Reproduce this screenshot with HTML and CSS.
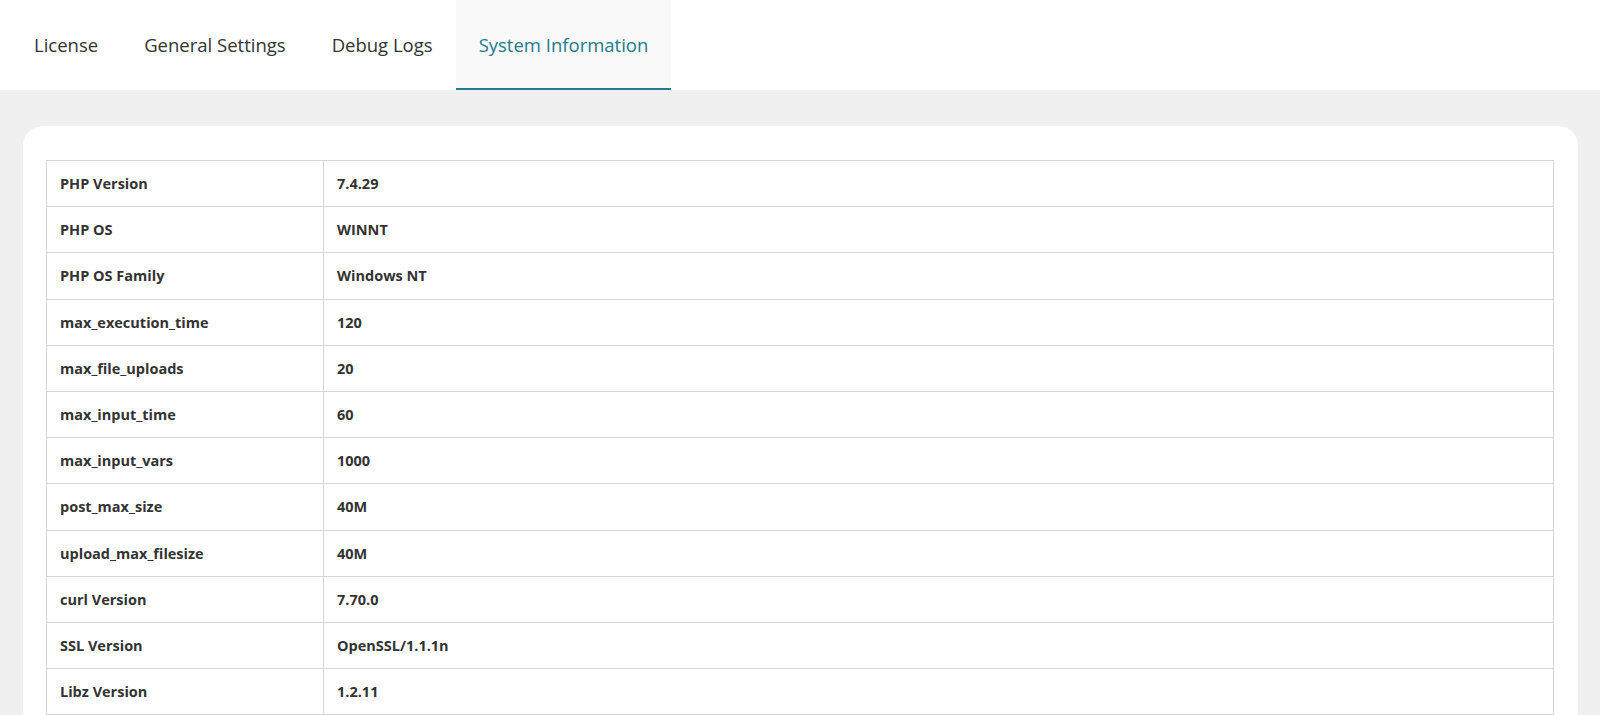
FILE: index.html
```html
<!DOCTYPE html>
<html lang="en">
<head>
    <meta charset="UTF-8">
    <meta name="viewport" content="width=device-width, initial-scale=1.0">
    <title>System Information</title>
    <link rel="stylesheet" href="styles.css">
</head>
<body>
    <!-- tabs -->
    <div class="tabs">
        <a class="tab" href="#">License</a>
        <a class="tab" href="#">General Settings</a>
        <a class="tab" href="#">Debug Logs</a>
        <a class="tab active" href="#">System Information</a>
    </div>

    <div class="content">
        <div class="card">
            <table class="info-table">
                <tr><td class="key">PHP Version</td><td>7.4.29</td></tr>
                <tr><td class="key">PHP OS</td><td>WINNT</td></tr>
                <tr><td class="key">PHP OS Family</td><td>Windows NT</td></tr>
                <tr><td class="key">max_execution_time</td><td>120</td></tr>
                <tr><td class="key">max_file_uploads</td><td>20</td></tr>
                <tr><td class="key">max_input_time</td><td>60</td></tr>
                <tr><td class="key">max_input_vars</td><td>1000</td></tr>
                <tr><td class="key">post_max_size</td><td>40M</td></tr>
                <tr><td class="key">upload_max_filesize</td><td>40M</td></tr>
                <tr><td class="key">curl Version</td><td>7.70.0</td></tr>
                <tr><td class="key">SSL Version</td><td>OpenSSL/1.1.1n</td></tr>
                <tr><td class="key">Libz Version</td><td>1.2.11</td></tr>
                <tr><td class="key"></td><td></td></tr>
            </table>
        </div>
    </div>
</body>
</html>
```

FILE: styles.css
```css
body {
    font-family: "Open Sans", "Noto Sans", sans-serif;
    background-color: #f0f0f0;
    color: #333;
    margin: 0;
    padding: 0;
}

.tabs {
    display: flex;
    background: #fff;
    height: 90px;
    padding-left: 11px;
}

.tab {
    display: flex;
    align-items: center;
    padding: 0 23px;
    font-size: 18.5px;
    color: #333;
    text-decoration: none;
    border-bottom: 2px solid transparent;
    box-sizing: border-box;
}

.tab.active {
    background: #f9f9f9;
    color: #237b8d;
    border-bottom-color: #237b8d;
}

.content {
    padding: 36px 22px 0 23px;
}

.card {
    background: #fff;
    border-radius: 20px;
    padding: 34px 24px 24px 23px;
}

.info-table {
    width: 100%;
    border-collapse: collapse;
    font-size: 14.5px;
    font-weight: bold;
}

.info-table td {
    border: 1px solid #d6d6d6;
    padding: 0 13px;
    height: 45.2px;
}

.info-table td.key {
    width: 250px;
}
```
